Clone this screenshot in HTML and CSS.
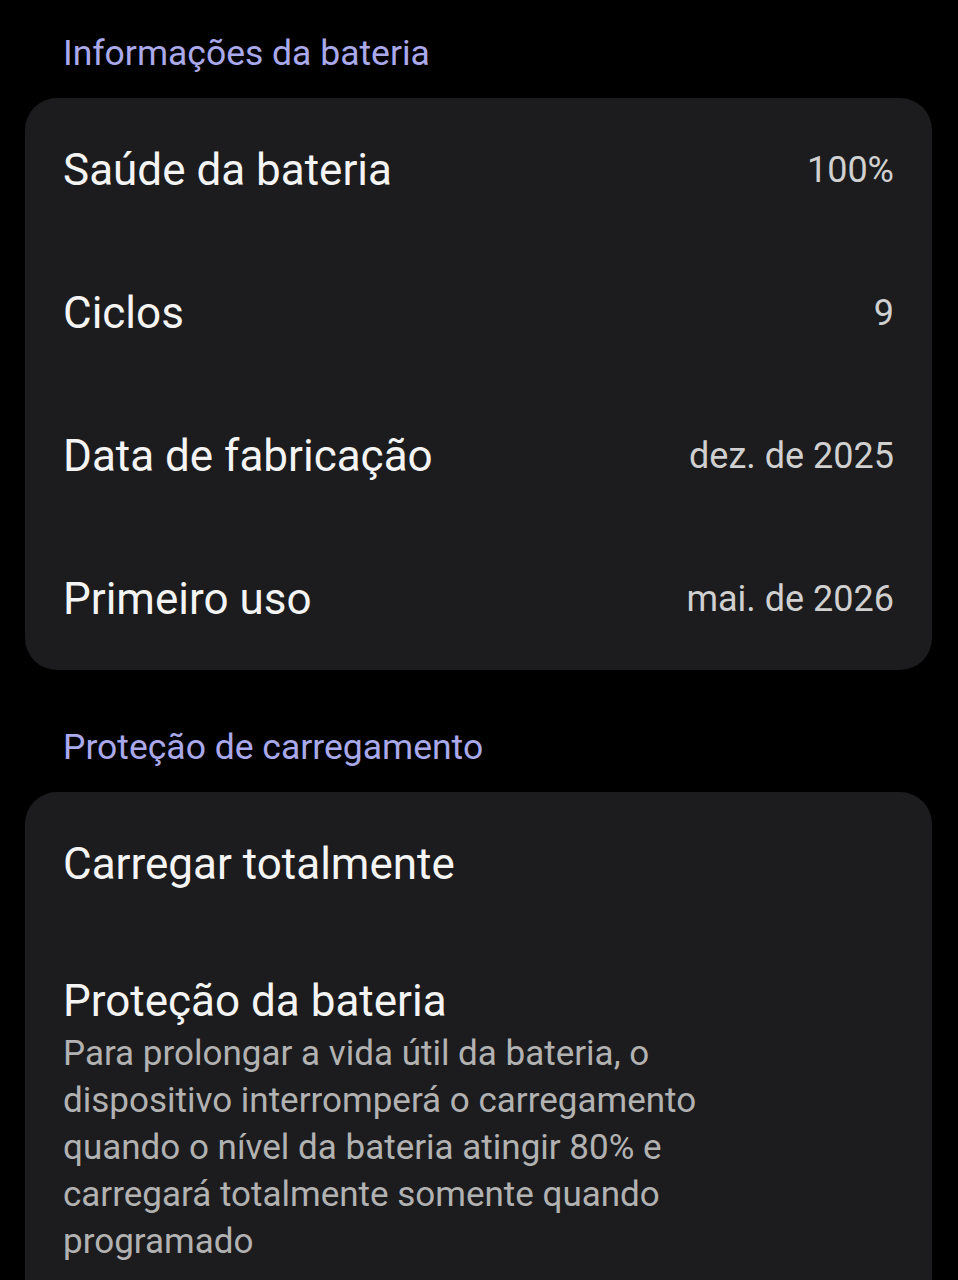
FILE: index.html
```html
<!DOCTYPE html>
<html lang="pt-BR">

<head>
    <meta charset="UTF-8">
    <meta name="viewport" content="width=device-width, initial-scale=1.0">
    <title>Bateria</title>
    <link rel="stylesheet" href="styles.css">
</head>

<body>
    <div class="page">
        <!-- Informações -->
        <h2 class="groupTitle">Informações da bateria</h2>
        <ul class="card">
            <li class="row">
                <span class="rowTitle">Saúde da bateria</span>
                <span class="rowValue">100%</span>
            </li>
            <li class="row">
                <span class="rowTitle">Ciclos</span>
                <span class="rowValue">9</span>
            </li>
            <li class="row">
                <span class="rowTitle">Data de fabricação</span>
                <span class="rowValue">dez. de 2025</span>
            </li>
            <li class="row">
                <span class="rowTitle">Primeiro uso</span>
                <span class="rowValue">mai. de 2026</span>
            </li>
        </ul>

        <!-- Proteção -->
        <h2 class="groupTitle second">Proteção de carregamento</h2>
        <ul class="card">
            <li class="row">
                <span class="rowTitle">Carregar totalmente</span>
            </li>
            <li class="row multi">
                <span class="rowTitle">Proteção da bateria</span>
                <p class="rowDesc">Para prolongar a vida útil da bateria, o dispositivo interromperá o carregamento quando o nível da bateria atingir 80% e carregará totalmente somente quando programado</p>
            </li>
        </ul>
    </div>
</body>

</html>
```

FILE: styles.css
```css
/* 초기화 */
* {
    box-sizing: border-box;
}

body {
    margin: 0;
    background: #000;
    font-family: Roboto, "Noto Sans", sans-serif;
    color: #f4f4f4;
}

ul {
    list-style: none;
    padding: 0;
    margin: 0;
}

.page {
    padding: 29px 26px 0 25px;
}

/* 그룹 제목 */
.groupTitle {
    margin: 0 0 21px;
    padding-left: 38px;
    font-size: 35.5px;
    font-weight: 400;
    line-height: 48px;
    color: #a9a9ec;
}

.groupTitle.second {
    margin-top: 53px;
}

/* 카드 */
.card {
    background: #1c1c1e;
    border-radius: 32px;
}

.row {
    display: flex;
    align-items: center;
    justify-content: space-between;
    height: 143px;
    padding: 0 38px 0 38px;
}

.rowTitle {
    font-size: 44px;
    line-height: 54px;
}

.rowValue {
    font-size: 36px;
    color: #d0d0d0;
}

.row.multi {
    display: block;
    height: auto;
    padding-top: 39px;
    padding-bottom: 60px;
}

.rowDesc {
    margin: 2px 0 0;
    padding-right: 180px;
    font-size: 35px;
    line-height: 47px;
    color: #b2b2b2;
}
```
